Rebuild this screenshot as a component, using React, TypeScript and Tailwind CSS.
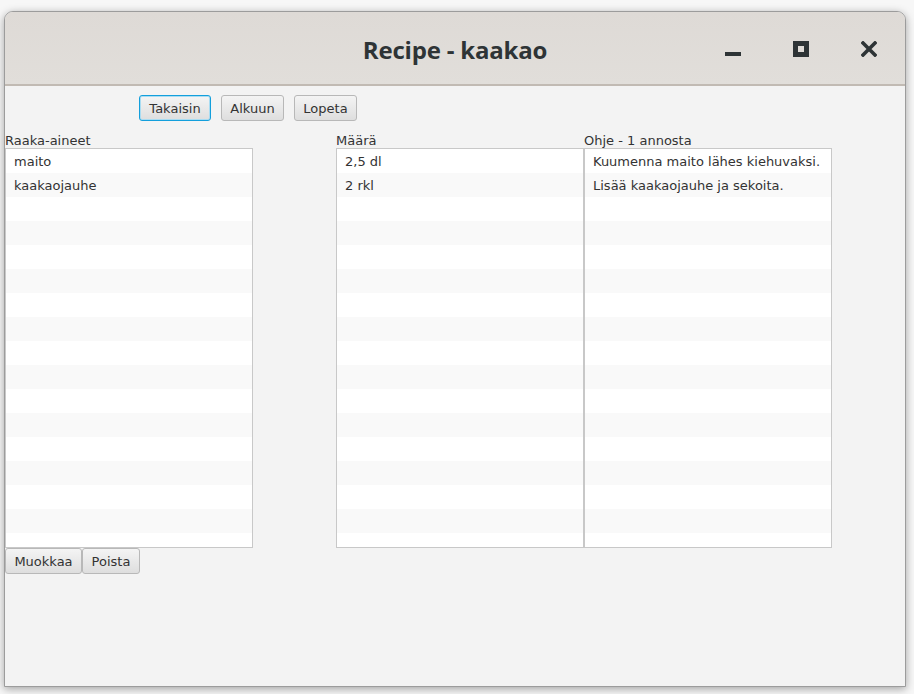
import React from 'react'

const ingredients = ['maito', 'kaakaojauhe']
const amounts = ['2,5 dl', '2 rkl']
const steps = ['Kuumenna maito lähes kiehuvaksi.', 'Lisää kaakaojauhe ja sekoita.']

const ROWS = 17

function Button({ label, focused = false, className = '' }: { label: string; focused?: boolean; className?: string }) {
  return (
    <button
      className={
        'h-[26px] rounded-[3px] bg-gradient-to-b from-[#f4f4f4] to-[#dedede] pt-[2px] text-[13px] text-[#333] ' +
        (focused
          ? 'border border-[#139fdc] shadow-[inset_0_0_0_1px_#a9dcf2] '
          : 'border border-[#b8b8b8] ') +
        className
      }
    >
      {label}
    </button>
  )
}

function ListBox({ items, className = '' }: { items: string[]; className?: string }) {
  return (
    <div className={'h-[400px] overflow-hidden border border-[#c8c8c8] bg-white ' + className}>
      {Array.from({ length: ROWS }).map((_, i) => (
        <div
          key={i}
          className={'flex h-[24px] shrink-0 items-center pl-[8px] pt-[1px] text-[13px] text-[#333] ' + (i % 2 === 1 ? 'bg-[#f9f9f9]' : 'bg-white')}
        >
          {items[i] ?? ''}
        </div>
      ))}
    </div>
  )
}

export default function App() {
  return (
    <div className="h-[694px] w-[914px] bg-[#f7f7f7] pl-[4px] pt-[11px]" style={{ fontFamily: '"DejaVu Sans", sans-serif' }}>
      <div className="flex h-[676px] w-[902px] flex-col overflow-hidden rounded-t-[9px] border border-[#9c9c9c] bg-[#f3f3f3] shadow-[0_2px_9px_rgba(0,0,0,0.35)]">
        {/* Title bar */}
        <div className="grid h-[74px] shrink-0 grid-cols-[1fr_auto_1fr] items-center border-b-2 border-[#c1bab3] bg-gradient-to-b from-[#dedad6] to-[#e1deda]">
          <div />
          <div className="pt-[3px] text-[24px] font-bold tracking-[-0.2px] text-[#2e3436]" style={{ fontFamily: '"Open Sans", sans-serif' }}>
            Recipe - kaakao
          </div>
          <div className="flex items-center justify-end gap-[52px] pr-[28px] pt-[2px]">
            <svg width="16" height="16" viewBox="0 0 16 16">
              <rect x="0" y="11" width="16" height="4" fill="#2e3436" />
            </svg>
            <svg width="16" height="16" viewBox="0 0 16 16">
              <rect x="2.5" y="2.5" width="11" height="11" fill="none" stroke="#2e3436" strokeWidth="5" />
            </svg>
            <svg width="16" height="16" viewBox="0 0 16 16">
              <path d="M2 2 L14 14 M14 2 L2 14" stroke="#2e3436" strokeWidth="3.6" strokeLinecap="square" />
            </svg>
          </div>
        </div>

        {/* Content */}
        <div className="flex flex-col">
          <div className="flex gap-[10px] pl-[134px] pt-[9px]">
            <Button label="Takaisin" focused className="w-[72px]" />
            <Button label="Alkuun" className="w-[63px]" />
            <Button label="Lopeta" className="w-[63px]" />
          </div>

          <div className="mt-[11px] flex">
            <div className="flex w-[248px] flex-col">
              <div className="h-[16px] pt-[1px] text-[13px] leading-[16px] text-[#333]">Raaka-aineet</div>
              <ListBox items={ingredients} />
              <div className="flex">
                <Button label="Muokkaa" className="w-[77px]" />
                <Button label="Poista" className="w-[58px]" />
              </div>
            </div>
            <div className="ml-[83px] flex w-[248px] flex-col">
              <div className="h-[16px] pt-[1px] text-[13px] leading-[16px] text-[#333]">Määrä</div>
              <ListBox items={amounts} />
            </div>
            <div className="flex w-[248px] flex-col">
              <div className="h-[16px] pt-[1px] text-[13px] leading-[16px] text-[#333]">Ohje - 1 annosta</div>
              <ListBox items={steps} />
            </div>
          </div>
        </div>
      </div>
    </div>
  )
}
